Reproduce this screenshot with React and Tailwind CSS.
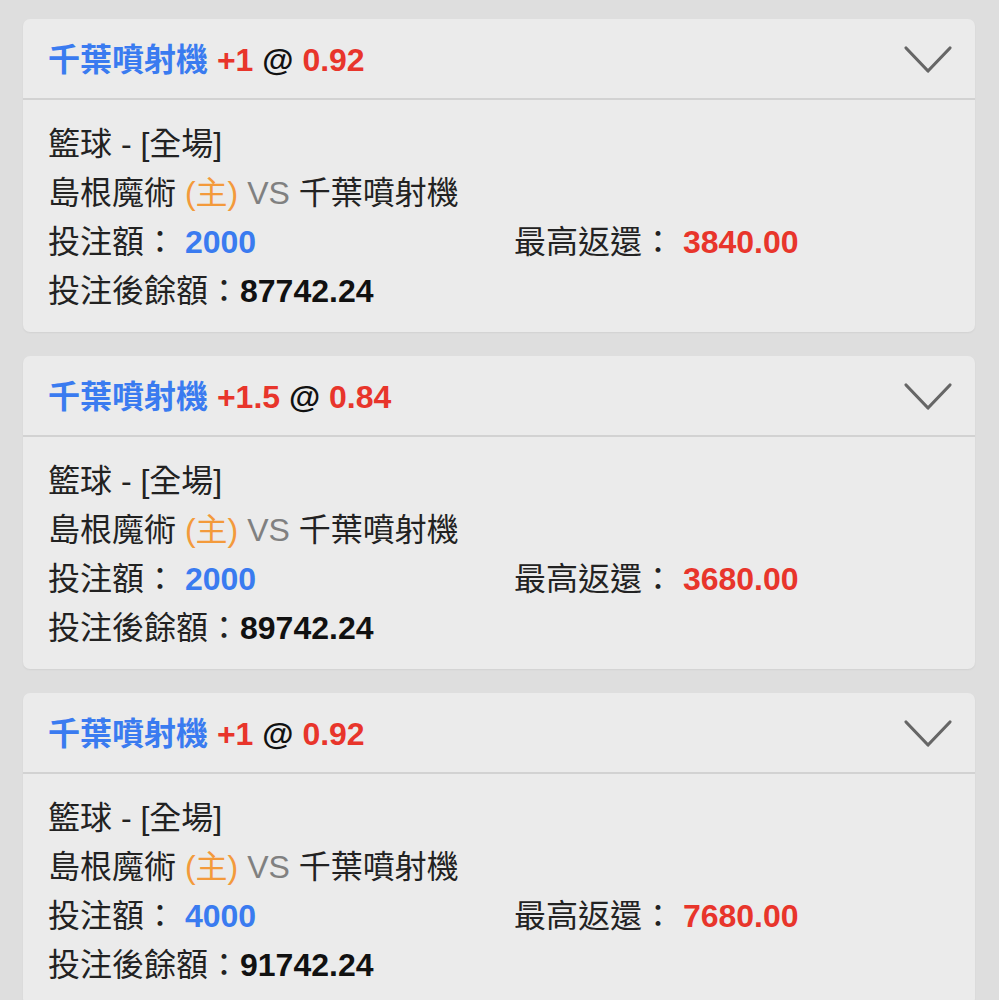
const bets = [
  { team: '千葉噴射機', line: '+1', odds: '0.92', stake: '2000', maxReturn: '3840.00', balance: '87742.24' },
  { team: '千葉噴射機', line: '+1.5', odds: '0.84', stake: '2000', maxReturn: '3680.00', balance: '89742.24' },
  { team: '千葉噴射機', line: '+1', odds: '0.92', stake: '4000', maxReturn: '7680.00', balance: '91742.24' },
];

function Chevron() {
  return (
    <svg width="50" height="30" viewBox="0 0 50 30" fill="none" className="text-[#666]">
      <polyline points="3,3 25,26 47,3" stroke="currentColor" strokeWidth="3.2" strokeLinecap="round" strokeLinejoin="round" />
    </svg>
  );
}

function BetCard({ bet }) {
  return (
    <div className="rounded-[7px] bg-[#ebebeb] shadow-[0_1px_2px_rgba(0,0,0,0.06)]">
      {/* header */}
      <div className="flex h-[81px] items-center justify-between border-b-2 border-[#d2d2d2] pl-[25px] pr-[22px] pt-[2px]">
        <div className="text-[32px] font-bold leading-none">
          <span className="text-[#3a7bf0]">{bet.team}</span>{' '}
          <span className="text-[#e8352b]">{bet.line}</span>{' '}
          <span className="text-[#111]">@</span>{' '}
          <span className="text-[#e8352b]">{bet.odds}</span>
        </div>
        <Chevron />
      </div>

      {/* body */}
      <div className="px-[25px] pb-[16px] pt-[20px] text-[32px] leading-[49px] text-[#222]">
        <div>籃球 - [全場]</div>
        <div>
          島根魔術 <span className="text-[#f39a3b]">(主)</span>{' '}
          <span className="text-[#808080]">VS</span> 千葉噴射機
        </div>
        <div className="flex">
          <div className="w-[466px]">
            投注額： <span className="font-bold text-[#3a7bf0]">{bet.stake}</span>
          </div>
          <div>
            最高返還： <span className="font-bold text-[#e8352b]">{bet.maxReturn}</span>
          </div>
        </div>
        <div>
          投注後餘額：<span className="font-bold text-[#111]">{bet.balance}</span>
        </div>
      </div>
    </div>
  );
}

export default function App() {
  return (
    <div
      className="min-h-screen bg-[#dedede] pl-[23px] pr-[24px] pt-[19px] pb-6"
      style={{ fontFamily: '"Liberation Sans", "Noto Sans CJK TC", sans-serif' }}
    >
      <div className="flex flex-col gap-[24px]">
        {bets.map((bet, i) => (
          <BetCard key={i} bet={bet} />
        ))}
      </div>
    </div>
  );
}
